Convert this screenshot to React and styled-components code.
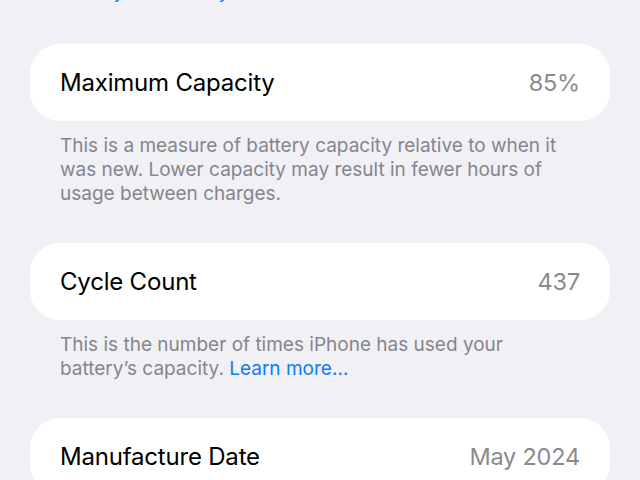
import React from "react";
import styled, { createGlobalStyle } from "styled-components";

const GlobalStyle = createGlobalStyle`
  html, body {
    margin: 0;
    padding: 0;
    background: #f0f0f5;
    overflow: hidden;
  }
  body {
    font-family: Inter, "Noto Sans", "Liberation Sans", sans-serif;
    -webkit-font-smoothing: antialiased;
  }
`;

const Screen = styled.div`
  width: 640px;
  height: 480px;
  overflow: hidden;
  background: #f0f0f5;
`;

// the list is scrolled a little, so the previous footer peeks in at the top
const Scroller = styled.div`
  margin-top: -20px;
  display: flex;
  flex-direction: column;
`;

const Section = styled.section`
  display: flex;
  flex-direction: column;
  margin-bottom: ${({ $gap }) => $gap || 37}px;
`;

const Card = styled.div`
  margin: 0 30px;
  height: 77px;
  padding: 0 30px;
  background: #ffffff;
  border-radius: 30px;
  display: flex;
  align-items: center;
  justify-content: space-between;
`;

const Label = styled.span`
  font-size: 24px;
  color: #000000;
  letter-spacing: -0.2px;
`;

const Value = styled.span`
  font-size: 23.5px;
  color: #8a8a8e;
  letter-spacing: -0.2px;
`;

const Footnote = styled.p`
  margin: 0;
  padding: ${({ $flush }) => ($flush ? "0 75px 0 60px" : "13px 75px 0 60px")};
  font-size: 19px;
  line-height: 24px;
  color: #86868b;
  letter-spacing: 0;
`;

const Link = styled.span`
  color: #0a7aff;
`;

const rows = [
  {
    label: "Maximum Capacity",
    value: "85%",
    note: (
      <>
        This is a measure of battery capacity relative to when it was new.
        Lower capacity may result in fewer hours of usage between charges.
      </>
    ),
  },
  {
    label: "Cycle Count",
    value: "437",
    note: (
      <>
        This is the number of times iPhone has used your battery’s capacity.{" "}
        <Link>Learn more…</Link>
      </>
    ),
  },
  {
    label: "Manufacture Date",
    value: "May 2024",
    note: null,
  },
];

export default function App() {
  return (
    <>
      <GlobalStyle />
      <Screen>
        <Scroller>
          <Section $gap={40}>
            <Footnote $flush>
              <Link>Battery &amp; Warranty…</Link>
            </Footnote>
          </Section>
          {rows.map((row) => (
            <Section key={row.label}>
              <Card>
                <Label>{row.label}</Label>
                <Value>{row.value}</Value>
              </Card>
              {row.note && <Footnote>{row.note}</Footnote>}
            </Section>
          ))}
        </Scroller>
      </Screen>
    </>
  );
}
